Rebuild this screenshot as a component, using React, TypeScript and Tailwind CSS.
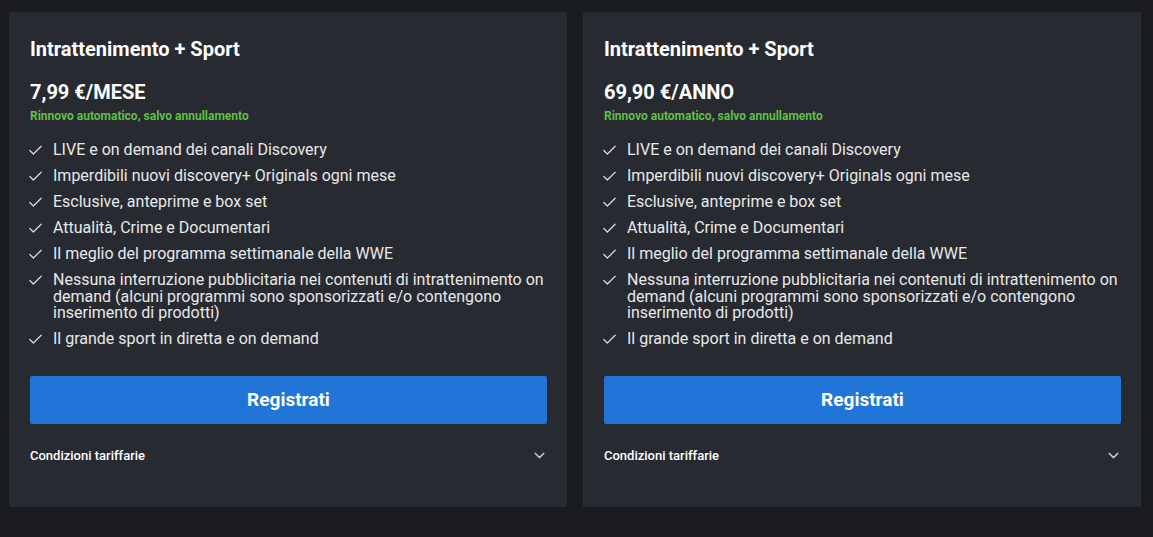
import { Check, ChevronDown } from "lucide-react";

interface PlanCardProps {
  title: string;
  price: string;
}

const features = [
  "LIVE e on demand dei canali Discovery",
  "Imperdibili nuovi discovery+ Originals ogni mese",
  "Esclusive, anteprime e box set",
  "Attualità, Crime e Documentari",
  "Il meglio del programma settimanale della WWE",
  "Nessuna interruzione pubblicitaria nei contenuti di intrattenimento on demand (alcuni programmi sono sponsorizzati e/o contengono inserimento di prodotti)",
  "Il grande sport in diretta e on demand",
];

function PlanCard({ title, price }: PlanCardProps) {
  return (
    <div className="flex h-[495px] w-[558px] flex-col bg-[#272b31] pl-[21px] pr-[20px] pt-[25px]">
      <h2 className="text-[20px] font-bold leading-6 text-white">{title}</h2>
      <div className="mt-[19px] text-[20px] font-bold leading-6 text-white">{price}</div>
      <p className="mt-1 text-[12px] font-bold leading-4 text-[#63be45]">
        Rinnovo automatico, salvo annullamento
      </p>
      <ul className="mt-[18px] flex flex-col gap-[9.5px]">
        {features.map((f) => (
          <li key={f} className="flex items-start text-[16px] leading-[16.5px] text-[#e8e8e8]">
            <span className="-ml-[3px] mr-[9px] flex h-[16.5px] w-[17px] shrink-0 items-center">
              <Check className="h-[17px] w-[17px] text-[#d6d8db]" strokeWidth={1.8} />
            </span>
            <span>{f}</span>
          </li>
        ))}
      </ul>
      <button className="mt-[28.5px] h-12 w-full shrink-0 rounded-[2px] bg-[#2275d8] text-[19px] font-bold text-white">
        Registrati
      </button>
      <div className="mt-[23px] flex items-center justify-between">
        <span className="text-[13px] font-medium leading-4 text-white">Condizioni tariffarie</span>
        <ChevronDown className="-mr-[1px] h-[17px] w-[17px] text-[#c0c4c8]" strokeWidth={2} />
      </div>
    </div>
  );
}

export default function App() {
  return (
    <div
      className="flex h-[537px] w-[1153px] gap-4 bg-[#1b1c20] pl-[9px] pr-[12px] pt-3"
      style={{ fontFamily: "Roboto, 'Liberation Sans', sans-serif" }}
    >
      <PlanCard title="Intrattenimento + Sport" price="7,99 €/MESE" />
      <PlanCard title="Intrattenimento + Sport" price="69,90 €/ANNO" />
    </div>
  );
}
